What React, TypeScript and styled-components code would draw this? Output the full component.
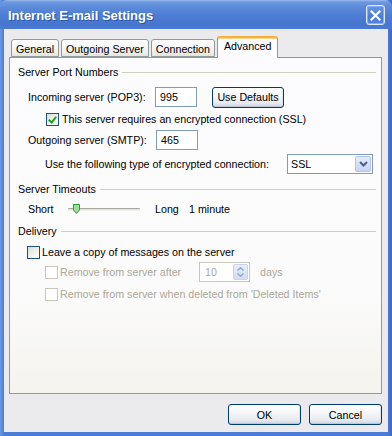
import React from 'react';
import styled, { createGlobalStyle } from 'styled-components';

const GlobalStyle = createGlobalStyle`
	html, body {
		margin: 0;
		padding: 0;
		background: #ffffff;
	}
	body {
		font-family: 'Liberation Sans', Arial, sans-serif;
		font-size: 10.7px;
		color: #000000;
	}
`;

const tabs = ['General', 'Outgoing Server', 'Connection', 'Advanced'];

const App = () => {
	return (
		<>
			<GlobalStyle />
			<Window>
				<TitleBar>
					<Title>Internet E-mail Settings</Title>
					<CloseButton aria-label="Close">
						<svg width="11" height="11" viewBox="0 0 11 11">
							<path d="M1.5 1.5 L9.5 9.5 M9.5 1.5 L1.5 9.5" stroke="#ffffff" strokeWidth="2.2" strokeLinecap="square" />
						</svg>
					</CloseButton>
				</TitleBar>
				<Body>
					<TabRow>
						{tabs.map((t) => (
							<Tab key={t} $active={t === 'Advanced'}>
								{t}
							</Tab>
						))}
					</TabRow>
					<Panel>
						<GroupHeader $top={7}>
							<span>Server Port Numbers</span>
						</GroupHeader>

						<Row $top={7} $height={22} $indent={19}>
							<FieldLabel>Incoming server (POP3):</FieldLabel>
							<TextBox $width={42} defaultValue="995" />
							<PushButton $width={72} $left={15}>Use Defaults</PushButton>
						</Row>

						<Row $top={4} $height={14} $indent={37}>
							<CheckBox $checked />
							<CheckLabel>This server requires an encrypted connection (SSL)</CheckLabel>
						</Row>

						<Row $top={3} $height={22} $indent={19}>
							<FieldLabel>Outgoing server (SMTP):</FieldLabel>
							<TextBox $width={42} $left={1} defaultValue="465" />
						</Row>

						<Row $top={2} $height={22} $indent={36}>
							<FieldLabel $width={242}>Use the following type of encrypted connection:</FieldLabel>
							<Select>
								<span>SSL</span>
								<DropButton>
									<svg width="9" height="6" viewBox="0 0 9 6">
										<path d="M1 1 L4.5 4.5 L8 1" stroke="#4d6185" strokeWidth="2" fill="none" />
									</svg>
								</DropButton>
							</Select>
						</Row>

						<GroupHeader $top={7}>
							<span>Server Timeouts</span>
						</GroupHeader>

						<Row $top={5} $height={16} $indent={19}>
							<FieldLabel $width={40}>Short</FieldLabel>
							<Slider>
								<SliderTrack />
								<SliderThumb width="7" height="10" viewBox="0 0 7 10">
									<path d="M0.5 0.5 H6.5 V6 L3.5 9.5 L0.5 6 Z" fill="#9adf9a" stroke="#2f9f2f" />
								</SliderThumb>
							</Slider>
							<FieldLabel $width={34} $left={15}>Long</FieldLabel>
							<span>1 minute</span>
						</Row>

						<GroupHeader $top={7}>
							<span>Delivery</span>
						</GroupHeader>

						<Row $top={7} $height={14} $indent={18}>
							<CheckBox />
							<CheckLabel $gap={2}>Leave a copy of messages on the server</CheckLabel>
						</Row>

						<Row $top={3} $height={20} $indent={36}>
							<CheckBox $disabled />
							<CheckLabel $gap={2} $disabled $width={139}>Remove from server after</CheckLabel>
							<SpinBox>
								<span>10</span>
								<SpinButtons>
									<svg width="7" height="4" viewBox="0 0 7 4">
										<path d="M0.5 3.5 L3.5 0.8 L6.5 3.5" stroke="#8ea4c8" strokeWidth="1.4" fill="none" />
									</svg>
									<svg width="7" height="4" viewBox="0 0 7 4">
										<path d="M0.5 0.5 L3.5 3.2 L6.5 0.5" stroke="#8ea4c8" strokeWidth="1.4" fill="none" />
									</svg>
								</SpinButtons>
							</SpinBox>
							<Muted $left={10}>days</Muted>
						</Row>

						<Row $top={5} $height={14} $indent={36}>
							<CheckBox $disabled />
							<CheckLabel $gap={2} $disabled>Remove from server when deleted from 'Deleted Items'</CheckLabel>
						</Row>
					</Panel>
					<Footer>
						<PushButton $width={73}>OK</PushButton>
						<PushButton $width={73}>Cancel</PushButton>
					</Footer>
				</Body>
			</Window>
		</>
	);
};

export default App;

const Window = styled.div`
	width: 392px;
	height: 436px;
	display: flex;
	flex-direction: column;
	background: linear-gradient(to right, #6a98e2 0px, #4a7bd6 4px, #4a7bd6 388px, #3a68c6 392px);
	box-sizing: border-box;
	padding: 0 4px 4px 4px;
`;

const TitleBar = styled.div`
	height: 29px;
	margin: 0 -4px;
	padding: 0 7px 0 8px;
	display: flex;
	align-items: center;
	justify-content: space-between;
	border-radius: 7px 7px 0 0;
	background: linear-gradient(
		to bottom,
		#9dbcee 0px,
		#6c98e0 2px,
		#5a89da 8px,
		#4c7cd3 16px,
		#4676ce 24px,
		#4a7bd3 29px
	);
`;

const Title = styled.div`
	font-family: 'Liberation Sans', Arial, sans-serif;
	font-size: 13px;
	font-weight: bold;
	color: #ffffff;
	text-shadow: 1px 1px 0 #2a55a8;
	margin-top: 1px;
`;

const CloseButton = styled.div`
	width: 17px;
	height: 18px;
	margin-top: 1px;
	display: flex;
	align-items: center;
	justify-content: center;
	border: 1px solid #dfe8f8;
	border-radius: 3px;
	background: linear-gradient(to bottom, #6a96e4, #4a7bd8 60%, #5584e0);
	box-shadow: inset 0 0 0 1px #86aaec;
`;

const Body = styled.div`
	flex: 1;
	display: flex;
	flex-direction: column;
	background: #ebeaec;
	padding: 7px 6px 0 5px;
`;

const TabRow = styled.div`
	display: flex;
	align-items: flex-end;
	gap: 2px;
	height: 21px;
	padding-left: 2px;
	position: relative;
	z-index: 1;
`;

const Tab = styled.div<{ $active?: boolean }>`
	height: ${(p) => (p.$active ? 22 : 18)}px;
	margin-bottom: ${(p) => (p.$active ? -1 : 0)}px;
	box-sizing: border-box;
	padding: ${(p) => (p.$active ? '2px 6px 0 6px' : '3px 4px 0 4px')};
	border: 1px solid #919b9c;
	border-bottom: ${(p) => (p.$active ? 'none' : '1px solid #919b9c')};
	border-top: ${(p) => (p.$active ? '2px solid #f4b23c' : '1px solid #919b9c')};
	border-radius: 3px 3px 0 0;
	white-space: nowrap;
	background: ${(p) =>
		p.$active ? '#fcfcfe' : 'linear-gradient(to bottom, #ffffff, #f1f0ec 70%, #e6e5dd)'};
	box-shadow: ${(p) => (p.$active ? 'inset 0 1px 0 #fbd78c' : 'none')};
`;

const Panel = styled.div`
	height: 337px;
	box-sizing: border-box;
	border: 1px solid #919b9c;
	background: linear-gradient(to bottom, #fcfcfe 0%, #fbfbfb 70%, #f4f3ee 100%);
	padding: 0 5px 0 8px;
	display: flex;
	flex-direction: column;
`;

const GroupHeader = styled.div<{ $top: number }>`
	margin-top: ${(p) => p.$top}px;
	height: 14px;
	display: flex;
	align-items: center;
	gap: 4px;

	&::after {
		content: '';
		flex: 1;
		height: 1px;
		background: #d0d0bf;
	}
`;

const Row = styled.div<{ $top: number; $height: number; $indent: number }>`
	margin-top: ${(p) => p.$top}px;
	height: ${(p) => p.$height}px;
	padding-left: ${(p) => p.$indent - 9}px;
	display: flex;
	align-items: center;
	white-space: nowrap;
`;

const FieldLabel = styled.span<{ $width?: number; $left?: number }>`
	width: ${(p) => p.$width ?? 127}px;
	margin-left: ${(p) => p.$left ?? 0}px;
	flex-shrink: 0;
`;

const TextBox = styled.input<{ $width: number; $left?: number }>`
	width: ${(p) => p.$width}px;
	height: 20px;
	margin-left: ${(p) => p.$left ?? 0}px;
	box-sizing: border-box;
	border: 1px solid #7f9db9;
	background: #ffffff;
	padding: 0 4px;
	font-family: inherit;
	font-size: 10.7px;
	color: #000000;
	outline: none;
`;

const PushButton = styled.button<{ $width: number; $left?: number }>`
	width: ${(p) => p.$width}px;
	height: 21px;
	margin-left: ${(p) => p.$left ?? 0}px;
	padding: 0;
	box-sizing: border-box;
	border: 1px solid #003c74;
	border-radius: 3px;
	background: linear-gradient(to bottom, #ffffff 0%, #f5f6f8 40%, #e6e9ef 80%, #cdd3df 100%);
	box-shadow: inset 0 -1px 0 #bec6d6, inset -1px 0 0 #e0e4ec;
	font-family: inherit;
	font-size: 10.7px;
	color: #000000;
`;

const CheckBox = styled.span<{ $checked?: boolean; $disabled?: boolean }>`
	position: relative;
	width: 13px;
	height: 13px;
	box-sizing: border-box;
	flex-shrink: 0;
	border: 1px solid ${(p) => (p.$disabled ? '#cac8bb' : '#1c5180')};
	background: ${(p) =>
		p.$disabled ? '#ffffff' : 'linear-gradient(135deg, #dcdcd7 0%, #f3f3ef 60%, #ffffff 100%)'};

	&::after {
		content: '';
		display: ${(p) => (p.$checked ? 'block' : 'none')};
		position: absolute;
		left: 3px;
		top: 1px;
		width: 3px;
		height: 6px;
		border: solid #21a121;
		border-width: 0 2px 2px 0;
		transform: rotate(40deg);
	}
`;

const CheckLabel = styled.span<{ $gap?: number; $disabled?: boolean; $width?: number }>`
	margin-left: ${(p) => p.$gap ?? 3}px;
	color: ${(p) => (p.$disabled ? '#aca899' : '#000000')};
	${(p) => (p.$width ? `width: ${p.$width}px;` : '')}
	flex-shrink: 0;
`;

const Muted = styled.span<{ $left?: number }>`
	margin-left: ${(p) => p.$left ?? 0}px;
	color: #aca899;
`;

const Select = styled.div`
	width: 86px;
	height: 20px;
	box-sizing: border-box;
	border: 1px solid #7f9db9;
	background: #ffffff;
	display: flex;
	align-items: center;
	justify-content: space-between;
	padding: 0 1px 0 3px;
`;

const DropButton = styled.span`
	width: 16px;
	height: 16px;
	box-sizing: border-box;
	display: flex;
	align-items: center;
	justify-content: center;
	border: 1px solid #b1c5e7;
	border-radius: 2px;
	background: linear-gradient(to bottom, #e4ecfb, #c5d5f5);
`;

const Slider = styled.div`
	position: relative;
	width: 72px;
	height: 16px;
	display: flex;
	align-items: center;
`;

const SliderTrack = styled.div`
	width: 100%;
	height: 3px;
	box-sizing: border-box;
	border-top: 1px solid #a8a7a2;
	border-bottom: 1px solid #f4f4f2;
	background: #e2e1dc;
	border-radius: 1px;
`;

const SliderThumb = styled.svg`
	position: absolute;
	left: 5px;
	top: 3px;
`;

const SpinBox = styled.div`
	width: 51px;
	height: 20px;
	box-sizing: border-box;
	border: 1px solid #c9c7ba;
	background: #ffffff;
	display: flex;
	align-items: center;
	justify-content: space-between;
	padding: 0 1px 0 5px;
	color: #aca899;
`;

const SpinButtons = styled.div`
	width: 15px;
	height: 16px;
	box-sizing: border-box;
	border: 1px solid #c7d4ec;
	border-radius: 2px;
	background: linear-gradient(to bottom, #e6edf9, #d3def3);
	display: flex;
	flex-direction: column;
	align-items: center;
	justify-content: space-around;
	padding: 1px 0;
`;

const Footer = styled.div`
	display: flex;
	justify-content: flex-end;
	gap: 8px;
	padding: 10px 0 0 0;
`;
